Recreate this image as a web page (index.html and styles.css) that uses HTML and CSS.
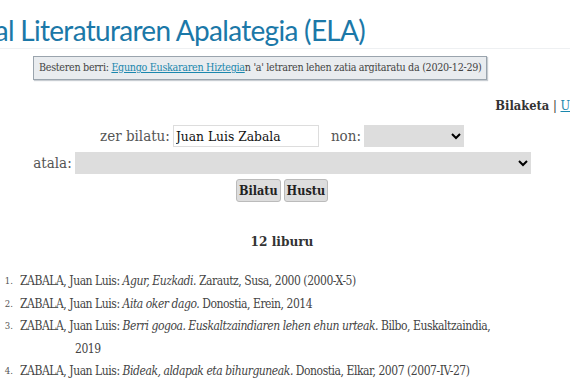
FILE: index.html
```html
<!DOCTYPE html>
<html lang="eu">
<head>
    <meta charset="UTF-8">
    <meta name="viewport" content="width=device-width, initial-scale=1.0">
    <title>Euskal Literaturaren Apalategia (ELA)</title>
    <link rel="stylesheet" href="styles.css">
</head>
<body>
    <div class="page">
        <div class="header">
            <h1>Euskal Literaturaren Apalategia (ELA)</h1>
        </div>
        <div class="news">
            Besteren berri: <a href="#">Egungo Euskararen Hiztegia</a>n 'a' letraren lehen zatia argitaratu da (2020-12-29)
        </div>
        <div class="nav">
            <strong>Bilaketa</strong> | <a href="#">Urteka</a>
        </div>

        <form class="search">
            <div class="row">
                <label>zer bilatu:</label>
                <input type="text" class="query" value="Juan Luis Zabala">
                <label class="non">non:</label>
                <select class="where"><option></option></select>
            </div>
            <div class="row">
                <label>atala:</label>
                <select class="section"><option></option></select>
            </div>
            <div class="row buttons">
                <button type="button">Bilatu</button>
                <button type="button">Hustu</button>
            </div>
        </form>

        <h2>12 liburu</h2>

        <ol class="books">
            <li><span class="num">1.</span><span class="entry">ZABALA, Juan Luis: <em>Agur, Euzkadi.</em> Zarautz, Susa, 2000 (2000-X-5)</span></li>
            <li><span class="num">2.</span><span class="entry">ZABALA, Juan Luis: <em>Aita oker dago.</em> Donostia, Erein, 2014</span></li>
            <li><span class="num">3.</span><span class="entry">ZABALA, Juan Luis: <em>Berri gogoa. Euskaltzaindiaren lehen ehun urteak.</em> Bilbo, Euskaltzaindia, 2019</span></li>
            <li><span class="num">4.</span><span class="entry">ZABALA, Juan Luis: <em>Bideak, aldapak eta bihurguneak.</em> Donostia, Elkar, 2007 (2007-IV-27)</span></li>
            <li><span class="num">5.</span><span class="entry">ZABALA, Juan Luis: <em>Bizia.</em> Donostia, Elkar, 2002</span></li>
        </ol>
    </div>
</body>
</html>
```

FILE: styles.css
```css
html, body {
    margin: 0;
    padding: 0;
    overflow: hidden;
}
body {
    font-family: "DejaVu Serif", serif;
    font-stretch: condensed;
    font-size: 12px;
    color: #333;
    background-color: #fff;
}
.page {
    width: 684px;
    margin-left: -60px;
}
.header {
    border-bottom: 1px solid #eef0f2;
    padding: 13px 0 1px 0;
}
h1 {
    margin: 0;
    font-family: Lato, sans-serif;
    font-stretch: normal;
    font-weight: normal;
    font-size: 28px;
    letter-spacing: -0.7px;
    color: #1b78a8;
}
.news {
    width: fit-content;
    margin: 7px 0 0 93px;
    padding: 4px 5px 4px 5px;
    background-color: #e9ecef;
    border: 1px solid #9aa4ad;
    box-shadow: 1px 1px 1px #c8cdd2;
    font-size: 10.7px;
    letter-spacing: -0.3px;
    line-height: 14px;
    color: #444;
    white-space: nowrap;
}
.news a, .nav a {
    color: #1a87ad;
}
.nav {
    text-align: right;
    margin-top: 18px;
    padding-right: 23px;
    font-size: 12.8px;
}
.nav strong {
    color: #333;
}
.search {
    margin-top: 12px;
}
.row {
    display: flex;
    justify-content: center;
    align-items: center;
    gap: 3px;
    margin-bottom: 5px;
    color: #555;
    font-size: 15px;
}
.query {
    width: 140px;
    height: 20px;
    padding: 0 2px;
    border: 1px solid #ddd;
    font-family: inherit;
    font-stretch: condensed;
    font-size: 13.7px;
    color: #111;
}
.non {
    margin-left: 9px;
}
select {
    height: 22px;
    border: none;
    background-color: #ddd;
    border-radius: 0;
}
.where {
    width: 100px;
}
.section {
    width: 456px;
}
button {
    font-family: inherit;
    font-stretch: condensed;
    font-weight: bold;
    font-size: 12.5px;
    color: #222;
    background-color: #ddd;
    border: 1px solid #bbb;
    border-radius: 3px;
    padding: 3px 2px;
}
h2 {
    text-align: center;
    font-size: 13.5px;
    margin: 31px 0 0;
    color: #333;
}
.books {
    list-style: none;
    margin: 21px 0 0;
    padding-left: 63px;
    width: 512px;
    font-size: 12px;
    letter-spacing: -0.45px;
    color: #444;
}
.books li {
    display: flex;
    gap: 7px;
    line-height: 22.5px;
}
.num {
    flex: none;
    width: 10px;
    text-align: right;
    font-size: 9.5px;
    letter-spacing: 0;
    color: #555;
}
.entry {
    padding-left: 55px;
    text-indent: -55px;
}
```
